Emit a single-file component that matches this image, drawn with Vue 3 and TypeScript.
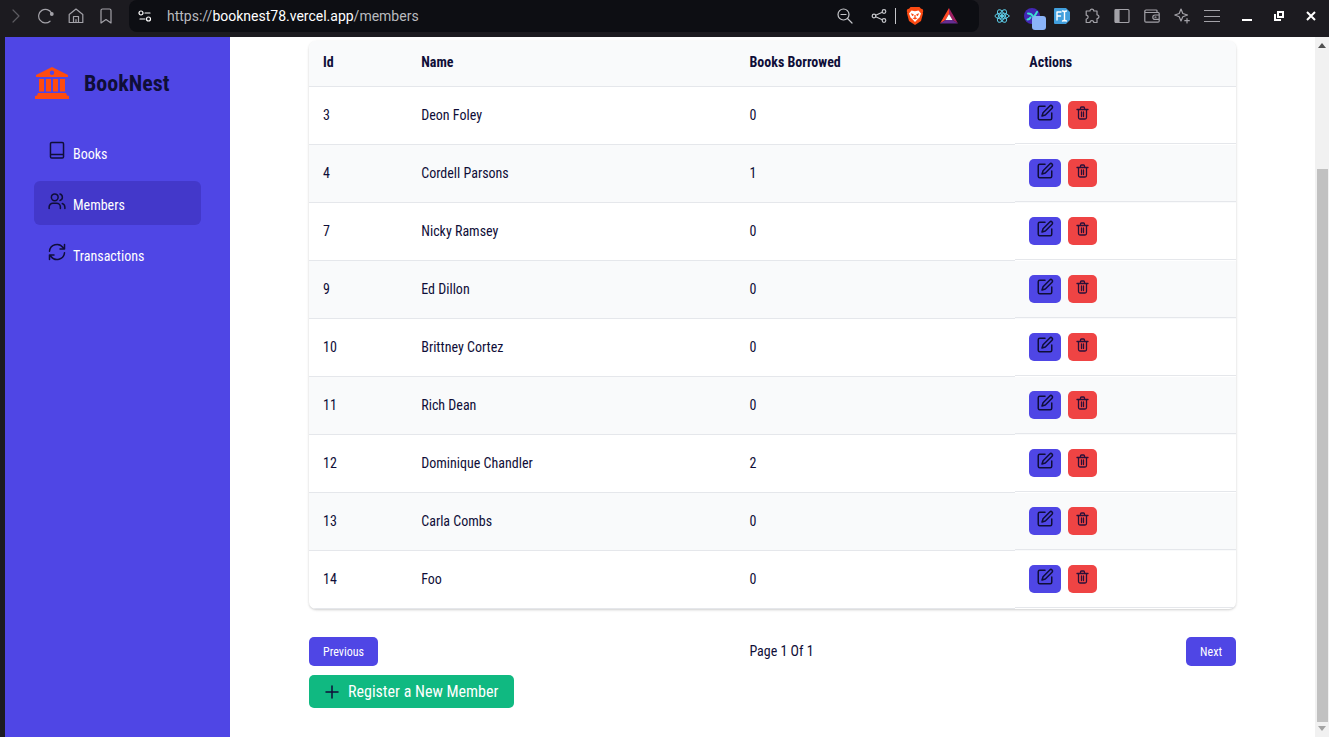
<script setup lang="ts">
interface Member {
  id: number
  name: string
  borrowed: number
}

const members: Member[] = [
  { id: 3, name: 'Deon Foley', borrowed: 0 },
  { id: 4, name: 'Cordell Parsons', borrowed: 1 },
  { id: 7, name: 'Nicky Ramsey', borrowed: 0 },
  { id: 9, name: 'Ed Dillon', borrowed: 0 },
  { id: 10, name: 'Brittney Cortez', borrowed: 0 },
  { id: 11, name: 'Rich Dean', borrowed: 0 },
  { id: 12, name: 'Dominique Chandler', borrowed: 2 },
  { id: 13, name: 'Carla Combs', borrowed: 0 },
  { id: 14, name: 'Foo', borrowed: 0 },
]
</script>

<template>
  <div class="window">
    <header class="toolbar">
      <div class="nav">
        <button type="button" aria-label="Forward" class="dim">
          <svg viewBox="0 0 16 16"><path d="M5 2l6 6-6 6" /></svg>
        </button>
        <button type="button" aria-label="Reload">
          <svg viewBox="0 0 16 16"><path d="M12 13.200A6.800 6.800 0 1 1 13.500 5" /><circle cx="13.800" cy="6" r="1.900" fill="currentColor" stroke="none" /></svg>
        </button>
        <button type="button" aria-label="Home">
          <svg viewBox="0 0 16 16"><path d="M1.2 6.5L8 1l6.8 5.500V14.500H1.200z M5.500 14.500V8.500h5v6M8 14.500v-3" /></svg>
        </button>
        <button type="button" aria-label="Bookmark">
          <svg viewBox="0 0 16 16"><path d="M3 2.500Q3 1 4.500 1h7Q13 1 13 2.500V15l-5-3.500L3 15z" /></svg>
        </button>
      </div>
      <div class="address">
        <button type="button" aria-label="Site settings" class="site">
          <svg viewBox="0 0 16 16"><circle cx="4" cy="5" r="2" /><path d="M8 5h5M3 11h5" /><circle cx="11.500" cy="11" r="2" /></svg>
        </button>
        <p class="url"><span>https://</span>booknest78.vercel.app<span>/members</span></p>
        <button type="button" aria-label="Zoom out" class="zoom">
          <svg viewBox="0 0 16 16"><circle cx="6.500" cy="6.500" r="5.500" /><path d="M10.500 10.500L15 15M4 6.500h5" /></svg>
        </button>
        <button type="button" aria-label="Share" class="share">
          <svg viewBox="0 0 16 16"><circle cx="3" cy="8" r="1.800" /><circle cx="13" cy="3.500" r="1.800" /><circle cx="13" cy="12.500" r="1.800" /><path d="M4.700 7.200l6.600-3M4.700 8.800l6.600 3" /></svg>
        </button>
        <span class="divider"></span>
        <button type="button" aria-label="Shields" class="brand">
          <svg viewBox="0 0 18 18" stroke="none"><path fill="#fb4a12" d="M4.500 0h9L15 1.800l1.500.2.800 2-.5 1.500.2 1-2 7.500L9 18l-6-4L1 6.500l.2-1L.7 4l.8-2L3 1.800z" /><path fill="#fff" d="M5.500 3.500L9 4.200l3.500-.7 2.500 3-1.500 4-1.700 1.600L9 15l-2.800-2.900-1.700-1.600L3 6.500z" /><path fill="#fb4a12" d="M4.800 6.300l3 .9-.6 1.600-1 .2zM13.200 6.300l-3 .9.6 1.600 1 .2zM8.400 8h1.200v2.500H8.400zM6.500 11.300L9 10.300l2.500 1L9 12.600z" /></svg>
        </button>
        <button type="button" aria-label="Rewards" class="brand rewards">
          <svg viewBox="0 0 18 18" stroke="none"><path fill="#ff4724" d="M9 1v6L5.500 13 0 16.500z" /><path fill="#9e1f63" d="M9 1l9 15.500-5.500-3.500L9 7z" /><path fill="#662d91" d="M0 16.500L5.500 13h7l5.500 3.500z" /><path fill="#fff" d="M9 7l3.500 6h-7z" /></svg>
        </button>
      </div>
      <div class="tools">
        <button type="button" aria-label="React tools" class="react">
          <svg viewBox="0 0 18 18"><ellipse cx="9" cy="9" rx="7" ry="2.900" /><ellipse cx="9" cy="9" rx="7" ry="2.900" transform="rotate(60 9 9)" /><ellipse cx="9" cy="9" rx="7" ry="2.900" transform="rotate(120 9 9)" /><circle cx="9" cy="9" r="1.500" fill="currentColor" /></svg>
        </button>
        <button type="button" aria-label="Extension" class="badge">
          <svg viewBox="0 0 22 22"><circle cx="8" cy="8" r="8" fill="#4327b5" stroke="none" /><path d="M4 5.500q3.500 0 4.500 2.500T13 4M3.500 11.500q2 0 3-2" stroke="#3be0d0" stroke-width="2" /><rect x="8" y="8" width="14" height="14" rx="3" fill="#8ab4f8" stroke="none" /></svg>
        </button>
        <button type="button" aria-label="Font finder" class="finder">
          <svg viewBox="0 0 16 16"><path fill="#419fdd" stroke="none" d="M1 0h11l4 4v8l-4 4H1q-1 0-1-1V1q0-1 1-1z" /><path d="M3 12V4h4M3 8h3.500M8.500 3q2 0 2 1.500v7q0 1.500-2 1.500M12.500 3q-2 0-2 1.500M12.500 13q-2 0-2-1.500" stroke="#fff" stroke-width="1.400" /></svg>
        </button>
        <button type="button" aria-label="Extensions">
          <svg viewBox="0 0 16 16"><path d="M3 3h3a1.900 1.900 0 1 1 3.800 0H13v3.800a1.900 1.900 0 1 1 0 3.800V14.500H9.800a1.900 1.900 0 1 0-3.800 0H2.200v-3.500a1.900 1.900 0 1 0 0-3.800V3z" /></svg>
        </button>
        <button type="button" aria-label="Sidebar">
          <svg viewBox="0 0 16 16"><rect x="1" y="1.500" width="14" height="13" rx="1" /><path fill="currentColor" d="M1.500 2h3.500v12H1.500z" /></svg>
        </button>
        <button type="button" aria-label="Wallet">
          <svg viewBox="0 0 16 16"><path d="M13 4V2.500Q13 2 12 2H2Q.8 2 .8 3v10q0 1.200 1.200 1.200h12q1.200 0 1.200-1.200V5.500Q15 4.500 14 4.500H2Q.8 4.500.8 3.500M15 7h-4a2.200 2.200 0 0 0 0 4.400h4M11 9.200h1" /></svg>
        </button>
        <button type="button" aria-label="Assistant">
          <svg viewBox="0 0 16 16"><path d="M7 1l1.800 4.500L13.500 7 8.800 8.800 7 13 5.200 8.800.8 7l4.400-1.500zM13 10.500v4.500M10.800 12.700h4.500" /></svg>
        </button>
        <button type="button" aria-label="Menu">
          <svg viewBox="0 0 16 16"><path d="M.5 2.500h15M.5 8.500h15M.5 13.500h15" /></svg>
        </button>
      </div>
      <div class="frame-controls">
        <button type="button" aria-label="Minimise"><svg viewBox="0 0 12 12"><path d="M1 10h10" /></svg></button>
        <button type="button" aria-label="Restore"><svg viewBox="0 0 12 12"><path d="M5 2h5v5H5zM2 4v6h6" /></svg></button>
        <button type="button" aria-label="Close"><svg viewBox="0 0 12 12"><path d="M2 2l8 8M10 2l-8 8" /></svg></button>
      </div>
    </header>

    <div class="page">
      <aside class="sidebar">
        <div class="logo">
          <svg viewBox="0 0 34 33"><path fill="#ff4b0f" fill-rule="evenodd" d="M17 1l16 8v2H1V9zM17 4.500a2.200 2.200 0 1 0 0 4.400A2.200 2.200 0 0 0 17 4.500zM4 13h5v12.500H4zM11 13h5v12.500h-5zM18 13h5v12.500h-5zM25 13h5v12.500h-5zM3 27h28l1 2.500 2 .5v3H0v-3l2-.5z" /></svg>
          <h1>BookNest</h1>
        </div>
        <nav class="menu">
          <a href="#books">
            <svg viewBox="0 0 24 24"><path d="M5 2h14a1.700 1.700 0 0 1 1.700 1.700V21a1.700 1.700 0 0 1-1.700 1.700H5A1.700 1.700 0 0 1 3.300 21V3.700A1.700 1.700 0 0 1 5 2zM3.300 18h17.400" /></svg>
            <span>Books</span>
          </a>
          <a href="#members" class="active" aria-current="page">
            <svg viewBox="0 0 24 24"><circle cx="9" cy="7" r="4.500" /><path d="M1.500 22v-2A5 5 0 0 1 6.500 15h5a5 5 0 0 1 5 5v2M16 2.700a4.500 4.500 0 0 1 0 8.600M19 15.300q3.500 1.200 3.500 5V22" /></svg>
            <span>Members</span>
          </a>
          <a href="#transactions">
            <svg viewBox="0 0 24 24"><path d="M2 11a10 10 0 0 1 18-5l2 2M22 2v6h-6M22 13a10 10 0 0 1-18 5l-2-2M2 22v-6h6" /></svg>
            <span>Transactions</span>
          </a>
        </nav>
      </aside>

      <main class="content">
        <div class="card">
          <table>
            <colgroup>
              <col class="c-id" />
              <col class="c-name" />
              <col class="c-books" />
              <col />
            </colgroup>
            <thead>
              <tr>
                <th scope="col">Id</th>
                <th scope="col">Name</th>
                <th scope="col">Books Borrowed</th>
                <th scope="col">Actions</th>
              </tr>
            </thead>
            <tbody>
              <tr v-for="m in members" :key="m.id">
                <td>{{ m.id }}</td>
                <td>{{ m.name }}</td>
                <td>{{ m.borrowed }}</td>
                <td class="actions">
                  <button type="button" class="edit" :aria-label="`Edit ${m.name}`">
                    <svg viewBox="0 0 24 24"><path d="M12 3H5a2 2 0 0 0-2 2v14a2 2 0 0 0 2 2h14a2 2 0 0 0 2-2v-7" /><path d="M18.400 2.600a2.100 2.100 0 0 1 3 3L12.400 14.600 8 16l1.400-4.400z" /></svg>
                  </button>
                  <button type="button" class="delete" :aria-label="`Delete ${m.name}`">
                    <svg viewBox="0 0 13 14"><path d="M1 3.500h11M4.500 3.500V2q0-1 1-1h2q1 0 1 1v1.500M2.500 3.500v8q0 1.500 1.500 1.500h5q1.500 0 1.500-1.500v-8M5.500 6v4.500M7.500 6v4.500" /></svg>
                  </button>
                </td>
              </tr>
            </tbody>
          </table>
        </div>

        <div class="pager">
          <button type="button">Previous</button>
          <p>Page 1 Of 1</p>
          <button type="button">Next</button>
        </div>
        <button type="button" class="register">
          <svg viewBox="0 0 14 14"><path d="M7 1v12M1 7h12" /></svg>
          <span>Register a New Member</span>
        </button>
      </main>

      <div class="scrollbar" aria-hidden="true">
        <svg viewBox="0 0 8 5"><path d="M4 0l4 5H0z" fill="#505050" /></svg>
        <div class="track"><div class="thumb"></div></div>
        <svg viewBox="0 0 8 5"><path d="M4 5l4-5H0z" fill="#a3a3a3" /></svg>
      </div>
    </div>
  </div>
</template>

<style>
body {
  margin: 0;
}
</style>

<style scoped>
* {
  box-sizing: border-box;
}

button {
  border: 0;
  padding: 0;
  background: none;
  color: inherit;
  font: inherit;
}

h1,
p {
  margin: 0;
}

svg {
  display: block;
  flex: none;
  fill: none;
  stroke-linecap: round;
  stroke-linejoin: round;
}

.window {
  min-height: 100vh;
  display: flex;
  flex-direction: column;
  background: #1c1b20;
  color: #0f0e38;
  font: 14px/20px "Roboto Condensed", "Liberation Sans Narrow", "Roboto", sans-serif;
}

.toolbar {
  display: flex;
  align-items: flex-start;
  height: 37px;
  color: #a3a2a8;
}

.toolbar button {
  display: flex;
  align-items: center;
  justify-content: center;
  height: 32px;
}

.toolbar svg {
  width: 16px;
  height: 16px;
  stroke: currentColor;
  stroke-width: 1.2;
}

.nav {
  display: flex;
  gap: 14px;
  padding-left: 8px;
  width: 129px;
}

.nav .dim {
  color: #5c5b60;
}

.address {
  flex: 1;
  display: flex;
  align-items: center;
  height: 32px;
  background: #0d0e13;
  border-radius: 8px;
  color: #c5c6ca;
}

.address .site {
  width: 32px;
  color: #fff;
}

.url {
  flex: 1;
  padding-left: 6px;
  font: 14px/32px "Roboto", "Noto Sans", sans-serif;
  color: #fff;
}

.url span {
  color: #b9babf;
}

.address .share {
  margin-left: 18px;
}

.divider {
  width: 1px;
  height: 16px;
  margin: 0 10px 0 8px;
  background: #c5c6ca;
}

.toolbar .brand svg {
  width: 18px;
  height: 18px;
  stroke: none;
}

.rewards {
  margin: 0 21px 0 16px;
}

.tools {
  display: flex;
  gap: 14px;
  padding-left: 14px;
}

.tools .react {
  color: #5ccbe6;
}

.toolbar .react svg {
  width: 18px;
  height: 18px;
  stroke-width: 1;
}

.tools .badge {
  margin: 0 -6px 0 -1px;
}

.toolbar .badge svg {
  width: 22px;
  height: 22px;
  margin-top: 6px;
}

.frame-controls {
  display: flex;
  gap: 20px;
  padding: 0 12px 0 21px;
  color: #fff;
}

.toolbar .frame-controls svg {
  width: 12px;
  height: 12px;
  stroke-width: 2;
  stroke-linecap: butt;
  stroke-linejoin: miter;
}

.page {
  flex: 1;
  display: flex;
  padding-left: 5px;
}

.sidebar {
  width: 225px;
  flex: none;
  padding: 29px;
  background: #4f46e5;
}

.logo {
  display: flex;
  align-items: flex-start;
  gap: 15px;
  padding-left: 1px;
}

.logo svg {
  width: 34px;
  height: 33px;
}

.logo h1 {
  font-size: 22px;
  line-height: 36px;
  font-weight: 700;
}

.menu {
  display: flex;
  flex-direction: column;
  gap: 7px;
  margin-top: 28px;
}

.menu a {
  display: flex;
  gap: 7px;
  height: 44px;
  padding: 11px 14px;
  border-radius: 6px;
  color: #fff;
  font-size: 14px;
  line-height: 26px;
  text-decoration: none;
}

.menu .active {
  background: #4338ca;
}

.menu svg {
  width: 18px;
  height: 18px;
  stroke: #0f0e38;
  stroke-width: 2;
}

.content {
  flex: 1;
  padding: 4px 79px 28px;
  background: #fff;
}

.card {
  overflow: hidden;
  border-radius: 7px;
  box-shadow: 0 1px 3px rgba(0, 0, 0, 0.12), 0 1px 2px rgba(0, 0, 0, 0.08);
}

table {
  width: 100%;
  table-layout: fixed;
  border-collapse: separate;
  border-spacing: 0;
  text-align: left;
}

.c-id {
  width: 10.6%;
}

.c-name {
  width: 35.4%;
}

.c-books {
  width: 30.2%;
}

th,
td {
  height: 58px;
  padding: 0 14px 2px;
  border-bottom: 1px solid #e5e7eb;
  font-size: 14px;
  vertical-align: middle;
}

th {
  height: 46px;
  padding-bottom: 4px;
  background: #f9fafb;
  font-weight: 700;
}

tbody tr:nth-child(even) {
  background: #f9fafb;
}

.actions {
  display: flex;
  gap: 7px;
  height: 57px;
  padding-top: 14px;
}

.edit,
.delete {
  display: flex;
  justify-content: center;
  height: 28px;
  border-radius: 5px;
}

.edit {
  width: 32px;
  padding-top: 3px;
  background: #4f46e5;
}

.edit svg {
  width: 18px;
  height: 18px;
  stroke: #0f0e38;
  stroke-width: 2;
}

.delete {
  width: 29px;
  padding-top: 5px;
  background: #ef4444;
}

.delete svg {
  width: 13px;
  height: 14px;
  stroke: #2a1038;
  stroke-width: 1.3;
}

.pager {
  display: grid;
  grid-template-columns: 46% 1fr auto;
  align-items: center;
  margin-top: 28px;
}

.pager button {
  justify-self: start;
  height: 29px;
  padding: 0 14px;
  border-radius: 5px;
  background: #4f46e5;
  color: #fff;
  font-size: 12px;
}

.pager p {
  padding: 0 14px 2px;
  font-size: 14px;
}

.register {
  display: flex;
  align-items: center;
  gap: 9px;
  height: 33px;
  margin-top: 9px;
  padding: 0 16px;
  border-radius: 5px;
  background: #10b981;
  color: #fff;
  font-size: 16px;
}

.register svg {
  width: 14px;
  height: 14px;
  stroke: #0f0e38;
  stroke-width: 1.5;
}

.scrollbar {
  display: flex;
  flex-direction: column;
  align-items: center;
  width: 14px;
  padding: 6px 0;
  background: #f1f1f1;
}

.scrollbar svg {
  width: 8px;
  height: 5px;
}

.track {
  flex: 1;
  display: flex;
  flex-direction: column;
  justify-content: flex-end;
  width: 100%;
  padding: 4px 1px 4px 2px;
}

.thumb {
  height: 82.5%;
  background: #c1c1c1;
}
</style>
